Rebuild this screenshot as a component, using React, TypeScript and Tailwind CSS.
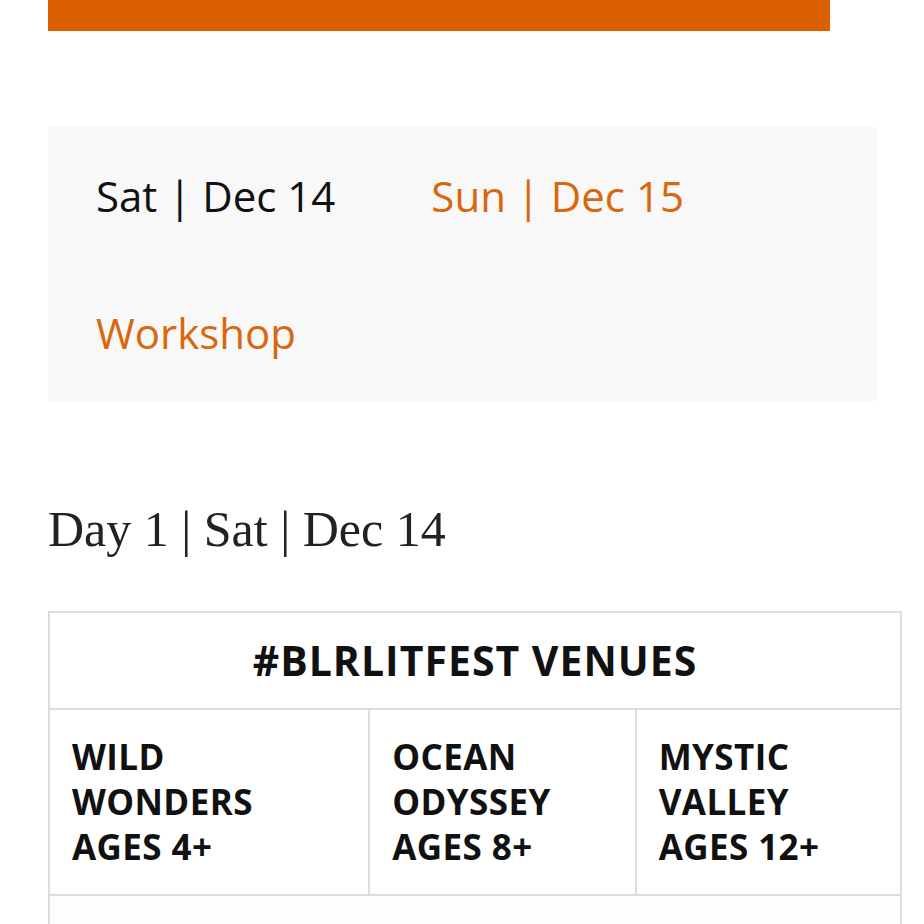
const venues = [
  { name: ["WILD", "WONDERS"], ages: "AGES 4+", w: "w-[321px]" },
  { name: ["OCEAN", "ODYSSEY"], ages: "AGES 8+", w: "w-[267px]" },
  { name: ["MYSTIC", "VALLEY"], ages: "AGES 12+", w: "w-[266px]" },
];

export default function App() {
  return (
    <div className="min-h-[924px] bg-white pl-[48px] font-['Open_Sans',sans-serif]">
      {/* Top bar */}
      <div className="h-[31px] w-[782px] bg-[#db6100]" />

      {/* Day tabs */}
      <div className="mt-[96px] flex w-[829px] flex-wrap bg-[#f8f8f8]">
        <div className="px-[48px] py-[40px] text-[42px] leading-[57px] text-[#111]">Sat | Dec 14</div>
        <div className="px-[48px] py-[40px] text-[42px] leading-[57px] text-[#d9670e]">Sun | Dec 15</div>
        <div className="px-[48px] py-[40px] text-[42px] leading-[57px] text-[#d9670e]">Workshop</div>
      </div>

      {/* Day heading */}
      <h2 className="mt-[98px] font-['Liberation_Serif',serif] text-[50px] leading-[60px] text-[#222]">
        Day 1 | Sat | Dec 14
      </h2>

      {/* Venues table */}
      <table className="mt-[52px] w-[854px] border-collapse text-[#111]">
        <thead>
          <tr>
            <th
              colSpan={3}
              className="border-2 border-[#dddddd] pt-[23px] pb-[24px] text-center text-[41px] font-bold leading-[48px] tracking-[1px]"
            >
              #BLRLITFEST VENUES
            </th>
          </tr>
        </thead>
        <tbody>
          <tr>
            {venues.map((v) => (
              <td
                key={v.ages}
                className={`${v.w} border-2 border-[#dddddd] pt-[24px] pb-[25px] pl-[22px] align-top text-[35px] font-bold leading-[45px] tracking-[0.4px]`}
              >
                <div>{v.name[0]}</div>
                <div>{v.name[1]}</div>
                <div>{v.ages}</div>
              </td>
            ))}
          </tr>
          <tr>
            <td colSpan={3} className="h-[80px] border-2 border-[#dddddd] bg-[#fdfdfd]" />
          </tr>
        </tbody>
      </table>
    </div>
  );
}
